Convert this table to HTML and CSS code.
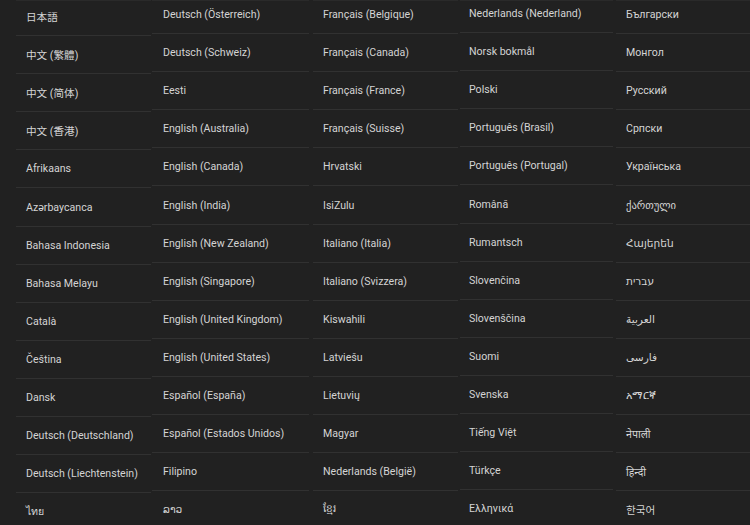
FILE: index.html
```html
<!DOCTYPE html>
<html lang="en">
<head>
<meta charset="utf-8">
<title>Languages</title>
<link rel="stylesheet" href="styles.css">
</head>
<body>
<div class="grid">
  <div class="col c1">
    <div class="edge"></div>
    <ul class="list">
      <li>日本語</li>
      <li lang="zh-TW">中文 (繁體)</li>
      <li lang="zh-CN">中文 (简体)</li>
      <li lang="zh-HK">中文 (香港)</li>
      <li>Afrikaans</li>
      <li>Azərbaycanca</li>
      <li>Bahasa Indonesia</li>
      <li>Bahasa Melayu</li>
      <li>Català</li>
      <li>Čeština</li>
      <li>Dansk</li>
      <li>Deutsch (Deutschland)</li>
      <li>Deutsch (Liechtenstein)</li>
      <li lang="th">ไทย</li>
    </ul>
  </div>
  <div class="col c2">
    <div class="edge"></div>
    <ul class="list">
      <li>Deutsch (Österreich)</li>
      <li>Deutsch (Schweiz)</li>
      <li>Eesti</li>
      <li>English (Australia)</li>
      <li>English (Canada)</li>
      <li>English (India)</li>
      <li>English (New Zealand)</li>
      <li>English (Singapore)</li>
      <li>English (United Kingdom)</li>
      <li>English (United States)</li>
      <li>Español (España)</li>
      <li>Español (Estados Unidos)</li>
      <li>Filipino</li>
      <li lang="lo">ລາວ</li>
    </ul>
  </div>
  <div class="col c3">
    <div class="edge"></div>
    <ul class="list">
      <li>Français (Belgique)</li>
      <li>Français (Canada)</li>
      <li>Français (France)</li>
      <li>Français (Suisse)</li>
      <li>Hrvatski</li>
      <li>IsiZulu</li>
      <li>Italiano (Italia)</li>
      <li>Italiano (Svizzera)</li>
      <li>Kiswahili</li>
      <li>Latviešu</li>
      <li>Lietuvių</li>
      <li>Magyar</li>
      <li>Nederlands (België)</li>
      <li lang="km">ខ្មែរ</li>
    </ul>
  </div>
  <div class="col c4">
    <div class="edge"></div>
    <ul class="list">
      <li>Nederlands (Nederland)</li>
      <li>Norsk bokmål</li>
      <li>Polski</li>
      <li>Português (Brasil)</li>
      <li>Português (Portugal)</li>
      <li>Română</li>
      <li>Rumantsch</li>
      <li>Slovenčina</li>
      <li>Slovenščina</li>
      <li>Suomi</li>
      <li>Svenska</li>
      <li>Tiếng Việt</li>
      <li>Türkçe</li>
      <li>Ελληνικά</li>
    </ul>
  </div>
  <div class="col c5">
    <div class="edge"></div>
    <ul class="list">
      <li>Български</li>
      <li>Монгол</li>
      <li>Русский</li>
      <li>Српски</li>
      <li>Українська</li>
      <li>ქართული</li>
      <li>Հայերեն</li>
      <li dir="auto">עברית</li>
      <li dir="auto">العربية</li>
      <li dir="auto">فارسی</li>
      <li>አማርኛ</li>
      <li>नेपाली</li>
      <li>हिन्दी</li>
      <li lang="ko">한국어</li>
    </ul>
  </div>
</div>
</body>
</html>
```
FILE: styles.css
```css
html, body {
  margin: 0;
  padding: 0;
  background: #212121;
  overflow: hidden;
}

body {
  width: 750px;
  height: 525px;
  font-family: Roboto, "Noto Sans", "DejaVu Sans", "Noto Sans CJK JP", "Noto Sans CJK KR", sans-serif;
  font-size: 10.6px;
  color: #d4d4d4;
}

.grid {
  display: flex;
  align-items: flex-start;
  padding-left: 16px;
  height: 525px;
  overflow: hidden;
}

.col {
  display: flex;
  flex-direction: column;
  flex-shrink: 0;
}

.c1 { width: 135px; }
.c2 { width: 157px; margin-left: 1px; }
.c3 { width: 145px; margin-left: 4px; }
.c4 { width: 153px; margin-left: 2px; }
.c5 { flex: 1; margin-left: 3px; }

.edge {
  height: 1px;
  background: #2a2a2a;
}

.list {
  list-style: none;
  margin: 0;
  padding: 0;
}

.c1 .list { margin-top: -3px; }
.c2 .list, .c3 .list, .c5 .list { margin-top: -5px; }
.c4 .list { margin-top: -6px; }

.list li {
  box-sizing: border-box;
  height: 38.1px;
  display: flex;
  align-items: center;
  padding-left: 10px;
  border-bottom: 1px solid #313131;
  white-space: nowrap;
}

.c2 .list li { padding-left: 11px; }
.c4 .list li { padding-left: 9px; }

.list li[dir="auto"] {
  justify-content: flex-start;
  direction: ltr;
  unicode-bidi: plaintext;
}

.list li:lang(zh-TW), .list li:lang(zh-HK) {
  font-family: Roboto, "Noto Sans CJK TC", sans-serif;
}
.list li:lang(zh-CN) {
  font-family: Roboto, "Noto Sans CJK SC", sans-serif;
}
.list li:lang(ko) {
  font-family: "Noto Sans CJK KR", sans-serif;
}
```
